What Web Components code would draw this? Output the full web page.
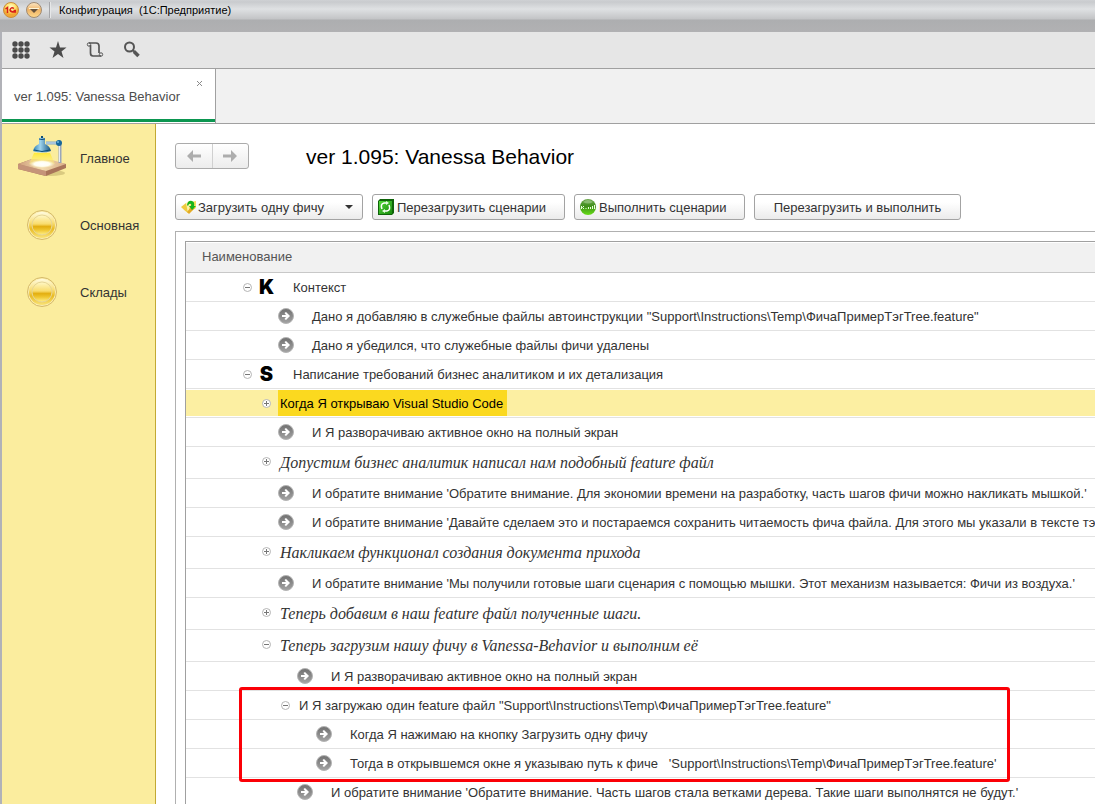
<!DOCTYPE html>
<html lang="ru">
<head>
<meta charset="utf-8">
<title>Конфигурация (1С:Предприятие)</title>
<style>
  html, body { margin: 0; height: 100%; }
  body { font: 13px/16px "Liberation Sans", Arial, sans-serif; color: #333; background: #fff; overflow: hidden; }
</style>
</head>
<body>
<app-window>
  <title-bar slot="title">Конфигурация &nbsp;(1С:Предприятие)</title-bar>
  <main-toolbar slot="toolbar"></main-toolbar>
  <tab-strip slot="tabs">ver 1.095: Vanessa Behavior</tab-strip>
  <side-nav slot="side">
    <nav-item icon="lamp">Главное</nav-item>
    <nav-item icon="coin">Основная</nav-item>
    <nav-item icon="coin">Склады</nav-item>
  </side-nav>
  <form-page>
    <span slot="heading">ver 1.095: Vanessa Behavior</span>
    <command-button slot="commands" icon="open" menu style="--w:188px">Загрузить одну фичу</command-button>
    <command-button slot="commands" icon="reload" style="--w:193px">Перезагрузить сценарии</command-button>
    <command-button slot="commands" icon="run" style="--w:171px">Выполнить сценарии</command-button>
    <command-button slot="commands" style="--w:207px">Перезагрузить и выполнить</command-button>
    <tree-grid></tree-grid>
  </form-page>
</app-window>

<script>
const define = (name, html, setup) => {
  const tpl = document.createElement('template');
  tpl.innerHTML = html;
  customElements.define(name, class extends HTMLElement {
    constructor() {
      super();
      this.attachShadow({ mode: 'open' }).append(tpl.content.cloneNode(true));
    }
    connectedCallback() { if (setup) setup(this, this.shadowRoot); }
  });
};

const ICONS = {
  lamp: `<svg width="50" height="44" viewBox="0 0 50 44">
    <defs>
      <linearGradient id="wood" x1="0" y1="0" x2="1" y2="0"><stop offset="0" stop-color="#cf9f7c"/><stop offset=".5" stop-color="#f3dcae"/><stop offset="1" stop-color="#d9ae88"/></linearGradient>
      <linearGradient id="shade" x1="0" y1="0" x2="1" y2="0"><stop offset="0" stop-color="#2b7fb4"/><stop offset=".4" stop-color="#9fd4ee"/><stop offset="1" stop-color="#12527f"/></linearGradient>
      <linearGradient id="beam" x1="0" y1="0" x2="0" y2="1"><stop offset="0" stop-color="#ffe838"/><stop offset="1" stop-color="#fff27a" stop-opacity=".3"/></linearGradient>
      <radialGradient id="glow"><stop offset="0" stop-color="#fff"/><stop offset=".6" stop-color="#fffef0"/><stop offset="1" stop-color="#fff8c0" stop-opacity="0"/></radialGradient>
    </defs>
    <ellipse cx="34" cy="37" rx="14" ry="3" fill="#8d7a3c" opacity=".3"/>
    <path d="M1 28 15 23 49 28 49 32 29 40 1 33Z" fill="#a9755a"/>
    <path d="M1 33V28L29 35V40Z" fill="#c59479"/>
    <path d="M1 28 15 23 35 24 49 28 29 35Z" fill="url(#wood)"/>
    <path d="M17 17H33L38 28 12 28Z" fill="url(#beam)"/>
    <ellipse cx="25" cy="28" rx="13" ry="4" fill="url(#glow)"/>
    <path d="M43 9V27" stroke="#9aa6bb" stroke-width="3"/><path d="M42.500 9V26" stroke="#e6ebf5"/>
    <path d="M29 7H42" stroke="#7ea6c8" stroke-width="3"/><path d="M29 7H42" stroke="#d3e2f0"/>
    <circle cx="42" cy="7" r="3" fill="#17679a"/><circle cx="41" cy="6" r="1" fill="#70b6dd"/>
    <path d="M22 2Q25 1 28 2L28 8Q33 10 34 15Q25 18 16 15Q17 10 22 8Z" fill="url(#shade)"/>
    <path d="M22 3Q25 4 28 3M17 14Q25 17 33 14" fill="none" stroke="#0d4d79"/><path d="M25 0V2" stroke="#0d4d79" stroke-width="2"/>
  </svg>`,
  coin: `<svg width="32" height="32" viewBox="0 0 32 32">
    <defs><linearGradient id="gold" x1="0" y1="0" x2="0" y2="1"><stop offset="0" stop-color="#fff8c8"/><stop offset=".45" stop-color="#f9dc6c"/><stop offset=".58" stop-color="#e3ae10"/><stop offset=".75" stop-color="#efc630"/><stop offset="1" stop-color="#fff08c"/></linearGradient>
    <linearGradient id="rim" x1="0" y1="0" x2="0" y2="1"><stop offset="0" stop-color="#fffbe0"/><stop offset=".4" stop-color="#f9df78"/><stop offset=".65" stop-color="#e8bb26"/><stop offset="1" stop-color="#f9e378"/></linearGradient></defs>
    <circle cx="16" cy="16" r="14.500" fill="#fbeeb0" stroke="#d5b968"/>
    <circle cx="16" cy="16" r="13" fill="url(#rim)"/>
    <circle cx="16" cy="16" r="10" fill="url(#gold)" stroke="#e5d596"/>
  </svg>`,
  open: `<svg width="16" height="16" viewBox="0 0 16 16">
    <path d="M0 8 5 4 7 7V14Q4 12 0 8Z" fill="#eecb3f"/><path d="M5 4 8 2 10 8 7 14Z" fill="#fff3a8"/>
    <path d="M7 14 15 9V2L10 3Z" fill="#f6df5d"/><path d="M6 13 10 8 14 9 8 15Z" fill="#e3ab25"/>
    <path d="M6 6Q7 1 11 2Q14 3 13 7L15 7 11 11 8 7H10Q11 4 8 5L7 7Z" fill="#17b31c"/>
  </svg>`,
  reload: `<svg width="16" height="16" viewBox="0 0 16 16">
    <defs><linearGradient id="grn" x1="0" y1="0" x2="1" y2="1"><stop offset="0" stop-color="#53d83a"/><stop offset="1" stop-color="#178a0c"/></linearGradient></defs>
    <path d="M0 2 2 0H16V14L14 16H0Z" fill="#0e6309"/><path d="M1 2H14V15H1Z" fill="url(#grn)"/>
    <path d="M4 10Q2 5 6 4H9M11 6Q13 11 9 12H6" fill="none" stroke="#fff" stroke-width="1.500"/>
    <path d="M8 2 11 4 8 6ZM7 10 4 12 7 14Z" fill="#e9ffe4"/>
  </svg>`,
  run: `<svg width="16" height="16" viewBox="0 0 16 16">
    <defs><linearGradient id="ball" x1="0" y1="0" x2="0" y2="1"><stop offset="0" stop-color="#6da84d"/><stop offset=".45" stop-color="#3f8f1b"/><stop offset="1" stop-color="#66dd14"/></linearGradient></defs>
    <circle cx="8" cy="8" r="8" fill="url(#ball)"/><path d="M3 3Q8-1 13 3Q8 6 3 3" fill="#a9cf96" opacity=".6"/>
    <path d="M1.500 7V10M4 7 2.500 8.500 4 10M6 9V10M8.500 8V10M10.500 8V10M12.500 7V10M14.500 6V10" stroke="#eaffdc" fill="none"/>
  </svg>`,
  step: `<svg width="16" height="16" viewBox="0 0 16 16">
    <defs><linearGradient id="ash" x1="0" y1="0" x2="0" y2="1"><stop offset="0" stop-color="#707070"/><stop offset="1" stop-color="#a4a4a4"/></linearGradient></defs>
    <circle cx="8" cy="8" r="7.500" fill="url(#ash)" stroke="#b4b4b4"/>
    <path d="M4 7H8L6.500 5 8 4 12 8 8 12 6.500 11 8 9H4Z" fill="#fff"/>
  </svg>`
};
const toggleIcon = open => `<svg width="9" height="9" viewBox="0 0 9 9"><circle cx="4.500" cy="4.500" r="4" fill="#fff" stroke="#b4b4b4"/><path d="M2 4.500H7${open ? '' : 'M4.500 2V7'}" stroke="#777"/></svg>`;

define('app-window', `
  <style>
    :host { display: flex; flex-direction: column; min-height: 100vh; box-sizing: border-box; }
    .frame { flex: 1; display: flex; flex-direction: column; border-left: 2px solid #b1b2b8; }
    .body { flex: 1; display: flex; height: 0; }
  </style>
  <slot name="title"></slot>
  <div class="frame">
    <slot name="toolbar"></slot>
    <slot name="tabs"></slot>
    <div class="body"><slot name="side"></slot><slot></slot></div>
  </div>`);

define('title-bar', `
  <style>
    :host { display: flex; align-items: flex-start; height: 32px; box-sizing: border-box; padding: 2px 0 0 3px;
      background: linear-gradient(#cfd1d4 0, #c9cbce 2px, #dfe1e3 9px, #c3c4c6 19px, #adaeb0 20px, #b1b1b3 32px); color: #000;
      font: 11px/16px "Liberation Sans", Arial, sans-serif; }
    button { all: unset; display: flex; margin-right: 7px; }
    .sep { width: 1px; height: 16px; margin-right: 8px; background: #a4a5a8; border-right: 1px solid #e6e7e8; }
  </style>
  <button aria-label="1С"><svg width="16" height="16" viewBox="0 0 16 16"><defs><radialGradient id="y" cy=".3"><stop offset="0" stop-color="#fffbd0"/><stop offset=".6" stop-color="#ffe46a"/><stop offset="1" stop-color="#f2a634"/></radialGradient></defs><circle cx="8" cy="8" r="7.500" fill="url(#y)" stroke="#c98d3e"/><path d="M2.500 7 4.500 5.500V11M11 6.500Q8 4.500 7 8Q7.500 10.500 13 10M10.500 8.500H13" stroke="#d8201a" stroke-width="1.500" fill="none"/></svg></button>
  <button aria-label="Меню"><svg width="16" height="16" viewBox="0 0 16 16"><defs><linearGradient id="o" x2="0" y2="1"><stop offset="0" stop-color="#fbe7c6"/><stop offset=".5" stop-color="#efb468"/><stop offset="1" stop-color="#ffd98b"/></linearGradient></defs><circle cx="8" cy="8" r="7.500" fill="url(#o)" stroke="#a08b74"/><path d="M3 6.500H13" stroke="#fff6d8"/><path d="M4 7H12L8 11Z" fill="#66533e"/></svg></button>
  <span class="sep"></span><span><slot></slot></span>`);

define('main-toolbar', `
  <style>
    :host { display: flex; align-items: center; gap: 16px; height: 36px; padding: 0 8px; background: #e6e6e6; border-bottom: 1px solid #a0a0a0; }
    button { all: unset; display: flex; width: 21px; justify-content: center; }
  </style>
  <button aria-label="Разделы"><svg width="18" height="18" viewBox="0 0 18 18" fill="#4b4b4b"><g id="r"><circle cx="3" cy="3" r="2.700"/><circle cx="9" cy="3" r="2.700"/><circle cx="15" cy="3" r="2.700"/></g><use href="#r" y="6"/><use href="#r" y="12"/></svg></button>
  <button aria-label="Избранное"><svg width="18" height="18" viewBox="0 0 18 18"><path d="M9 0 11 6.500H17.500L12.500 10.500 14.500 17 9 13 3.500 17 5.500 10.500 .5 6.500H7Z" fill="#4b4b4b"/></svg></button>
  <button aria-label="История"><svg width="18" height="18" viewBox="0 0 18 18" fill="none" stroke="#555" stroke-width="1.700"><path d="M3 2H10Q13 2 13 5V12M4.500 4V12Q4.500 15 7 15H15"/><circle cx="3" cy="3.500" r="1.700" stroke-width="1"/><circle cx="15" cy="13.500" r="1.700" stroke-width="1"/></svg></button>
  <button aria-label="Поиск"><svg width="18" height="18" viewBox="0 0 18 18" fill="none" stroke="#555"><circle cx="6.500" cy="6" r="4.500" stroke-width="2"/><path d="M9.500 9 12 11" stroke-width="2"/><path d="M11 10.500 15.500 15" stroke-width="3.500"/></svg></button>`);

define('tab-strip', `
  <style>
    :host { display: flex; height: 54px; background: #f1f1f1; border-bottom: 1px solid #a0a0a0; }
    .tab { display: flex; flex-direction: column; align-items: flex-start; box-sizing: border-box; width: 214px; padding: 9px 12px 0 12px;
      background: #fff; border-right: 1px solid #a0a0a0; box-shadow: inset 0 -1px #fff, inset 0 -4px #0b9650; color: #4d4d4d; }
    button { all: unset; display: flex; align-self: flex-end; padding: 3px 1px 0; }
    .name { padding-top: 3px; }
  </style>
  <div class="tab" role="tab" aria-selected="true">
    <button aria-label="Закрыть"><svg width="5" height="5" viewBox="0 0 5 5"><path d="M0 0 5 5M5 0 0 5" stroke="#8a8a8a"/></svg></button>
    <span class="name"><slot></slot></span>
  </div>`);

define('side-nav', `
  <style>
    :host { display: block; flex: none; width: 153px; background: #fbed9e; border-right: 1px solid #c2a934; }
    nav { display: flex; flex-direction: column; }
  </style><nav><slot></slot></nav>`);

define('nav-item', `
  <style>
    :host { display: block; }
    a { display: flex; align-items: center; height: 67px; color: #333; text-decoration: none; }
    .icon { display: flex; justify-content: center; width: 80px; margin-right: -2px; }
    .label { padding-top: 2px; }
  </style>
  <a href="#"><span class="icon"></span><span class="label"><slot></slot></span></a>`,
  (el, root) => { root.querySelector('.icon').innerHTML = ICONS[el.getAttribute('icon')]; });

define('form-page', `
  <style>
    :host { display: flex; flex-direction: column; flex: 1; min-width: 0; padding: 19px 0 0 19px; background: #fff; overflow: hidden; }
    header { display: flex; align-items: center; gap: 57px; height: 26px; }
    h1 { margin: 0; padding-top: 2px; font-weight: 400; font-size: 21px; line-height: 24px; color: #000; }
    .history { display: flex; box-sizing: border-box; width: 74px; height: 26px; border: 1px solid #ababab; border-radius: 3px; background: linear-gradient(#fff, #ececec); }
    .history button { all: unset; flex: 1; display: flex; align-items: center; justify-content: center; }
    .history button + button { border-left: 1px solid #d0d0d0; }
    .commands { display: flex; gap: 9px; margin: 25px 0 11px; }
    .panel { flex: 1; border: solid #b0b0b0; border-width: 1px 0 0 1px; padding: 9px 0 0 9px; }
  </style>
  <header>
    <div class="history">
      <button aria-label="Назад"><svg width="14" height="12" viewBox="0 0 14 12"><path d="M0 6 6 0V4.500H14V7.500H6V12Z" fill="#adadad"/></svg></button>
      <button aria-label="Вперёд"><svg width="14" height="12" viewBox="0 0 14 12"><path d="M14 6 8 0V4.500H0V7.500H8V12Z" fill="#adadad"/></svg></button>
    </div>
    <h1><slot name="heading"></slot></h1>
  </header>
  <div class="commands"><slot name="commands"></slot></div>
  <div class="panel"><slot></slot></div>`);

define('command-button', `
  <style>
    :host { display: block; flex: none; width: var(--w); }
    button { display: flex; align-items: center; width: 100%; height: 26px; margin: 0; padding: 0 9px 0 5px; border: 1px solid #a3a3a3; border-radius: 3px;
      background: linear-gradient(#fff, #fff 30%, #ebebeb); font: inherit; color: #333; white-space: nowrap; }
    .label { padding: 2px 0 0 3px; }
    :host(:not([icon])) button { justify-content: center; padding: 0; }
    :host(:not([icon])) .label { padding-left: 0; }
    :host([icon="open"]) .label { padding-left: 1px; }
    .arrow { display: none; margin-left: auto; }
    :host([menu]) .arrow { display: block; }
    .icon { display: flex; }
  </style>
  <button><span class="icon"></span><span class="label"><slot></slot></span><svg class="arrow" width="8" height="4" viewBox="0 0 8 4"><path d="M0 0H8L4 4Z" fill="#333"/></svg></button>`,
  (el, root) => { root.querySelector('.icon').innerHTML = ICONS[el.getAttribute('icon')] || ''; });

/* depth, kind: K / S = section, step = leaf, open / closed = group; text; flags */
const ROWS = [
  [0, 'K', 'Контекст'],
  [1, 'step', 'Дано я добавляю в служебные файлы автоинструкции "Support\\Instructions\\Temp\\ФичаПримерТэгTree.feature"'],
  [1, 'step', 'Дано я убедился, что служебные файлы фичи удалены'],
  [0, 'S', 'Написание требований бизнес аналитиком и их детализация'],
  [1, 'closed', 'Когда Я открываю Visual Studio Code', 'selected'],
  [1, 'step', 'И Я разворачиваю активное окно на полный экран'],
  [1, 'closed', 'Допустим бизнес аналитик написал нам подобный feature файл', 'note'],
  [1, 'step', "И обратите внимание 'Обратите внимание. Для экономии времени на разработку, часть шагов фичи можно накликать мышкой.'"],
  [1, 'step', "И обратите внимание 'Давайте сделаем это и постараемся сохранить читаемость фича файла. Для этого мы указали в тексте тэг t"],
  [1, 'closed', 'Накликаем функционал создания документа прихода', 'note'],
  [1, 'step', "И обратите внимание 'Мы получили готовые шаги сценария с помощью мышки. Этот механизм называется: Фичи из воздуха.'"],
  [1, 'closed', 'Теперь добавим в наш feature файл полученные шаги.', 'note'],
  [1, 'open', 'Теперь загрузим нашу фичу в Vanessa-Behavior и выполним её', 'note'],
  [2, 'step', 'И Я разворачиваю активное окно на полный экран'],
  [2, 'open', 'И Я загружаю один feature файл "Support\\Instructions\\Temp\\ФичаПримерТэгTree.feature"'],
  [3, 'step', 'Когда Я нажимаю на кнопку Загрузить одну фичу'],
  [3, 'step', "Тогда в открывшемся окне я указываю путь к фиче \u00a0 'Support\\Instructions\\Temp\\ФичаПримерТэгTree.feature'"],
  [2, 'step', "И обратите внимание 'Обратите внимание. Часть шагов стала ветками дерева. Такие шаги выполнятся не будут.'"]
];

define('tree-grid', `
  <style>
    :host { display: block; position: relative; border: solid #a0a0a0; border-width: 1px 0 0 1px; }
    table { width: 100%; border-collapse: separate; border-spacing: 0; table-layout: fixed; }
    th { height: 27px; padding: 0 16px 2px; border-top: 1px solid #fff; border-bottom: 1px solid #c8c8c8; background: #f1f1f1; font-weight: 400; text-align: left; color: #555; }
    td { padding: 0; border-bottom: 1px solid #e2e2e2; overflow: hidden; }
    .row { display: flex; height: 28px; padding-left: calc(52px + 19px * var(--depth)); white-space: nowrap; }
    .toggle, .icon { all: unset; display: flex; flex: none; align-items: center; justify-content: center; width: 19px; height: 28px; }
    .icon { margin-right: 14px; }
    .letter { font: 900 20px/28px Inter, sans-serif; color: #000; }
    .text { align-self: center; padding: 2px 4px 0 2px; margin-left: 2px; }
    .icon + .text { margin-left: 1px; }
    .note .row { height: 31px; }
    .note .text { padding-top: 0; font: italic 16px/19px "Liberation Serif", serif; }
    .selected .row { height: 26px; border: solid #fff; border-width: 1px 0; background: #fcefa2; align-items: center; }
    .selected .text { padding: 6px 4px 4px 2px; background: #fbd91f; color: #000; }
    .mark { position: absolute; left: 53px; top: 445px; box-sizing: border-box; width: 771px; height: 95px; border: 3px solid #fb0007; border-radius: 3px; pointer-events: none; }
  </style>
  <table><thead><tr><th scope="col">Наименование</th></tr></thead><tbody></tbody></table>
  <div class="mark"></div>`,
  (el, root) => {
    const body = root.querySelector('tbody');
    for (const [depth, kind, text, flag] of ROWS) {
      const section = kind === 'K' || kind === 'S';
      const tr = document.createElement('tr');
      if (flag) tr.className = flag;
      const toggle = kind === 'step' ? '<span class="toggle"></span>'
        : `<button class="toggle" aria-label="${kind === 'closed' ? 'Развернуть' : 'Свернуть'}">${toggleIcon(kind !== 'closed')}</button>`;
      const icon = section ? `<span class="icon letter">${kind}</span>` : kind === 'step' ? `<span class="icon">${ICONS.step}</span>` : '';
      tr.innerHTML = `<td><div class="row" style="--depth:${depth}">${toggle}${icon}<span class="text"></span></div></td>`;
      tr.querySelector('.text').textContent = text;
      body.append(tr);
    }
  });
</script>
</body>
</html>
